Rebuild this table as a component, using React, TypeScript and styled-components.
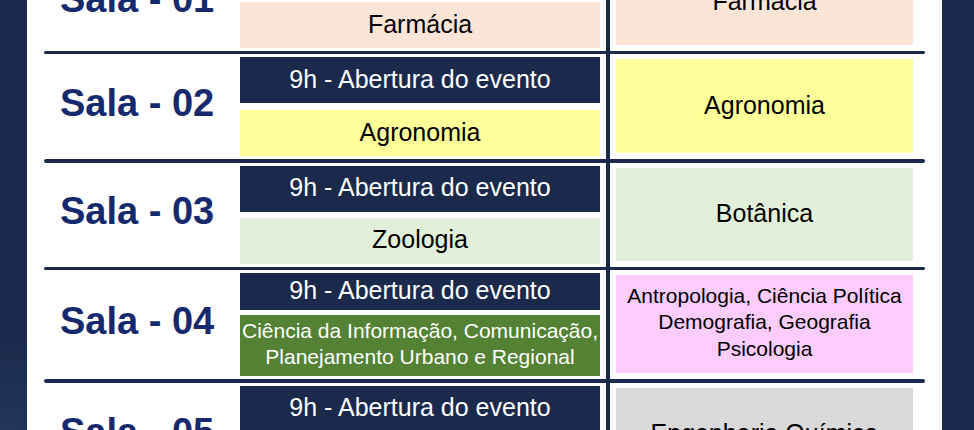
import React from 'react';
import styled, { createGlobalStyle } from 'styled-components';

const NAVY = '#1b2a4c';

const GlobalStyle = createGlobalStyle`
  html, body {
    margin: 0;
    padding: 0;
    background: ${NAVY};
    overflow: hidden;
  }
  body {
    font-family: "Liberation Sans", Arial, sans-serif;
    background: radial-gradient(circle at 0% 100%, #24405f 0%, ${NAVY} 14%);
    background-color: ${NAVY};
    min-height: 100vh;
  }
`;

const Page = styled.div`
  display: flex;
  padding: 0 32px 0 27px;
`;

const Panel = styled.div`
  width: 915px;
  margin-top: -46px;
  background: #ffffff;
  padding: 0 17px;
  box-sizing: border-box;
  display: flex;
  flex-direction: column;
`;

const Row = styled.div<{ h: number }>`
  display: grid;
  grid-template-columns: 196px 360px 16px 297px 12px;
  height: ${p => p.h}px;
`;

const Label = styled.div`
  display: flex;
  align-items: center;
  padding: 0 0 6px 16px;
  color: #15296c;
  font-weight: bold;
  font-size: 38px;
  white-space: nowrap;
`;

const LeftStack = styled.div`
  display: flex;
  flex-direction: column;
  justify-content: space-between;
  padding: 3px 0;
`;

const Cell = styled.div<{ bg: string; fg?: string; h?: number; small?: boolean }>`
  display: flex;
  align-items: center;
  justify-content: center;
  text-align: center;
  box-sizing: border-box;
  padding-bottom: 3px;
  background: ${p => p.bg};
  color: ${p => p.fg ?? '#000'};
  height: ${p => (p.h ? `${p.h}px` : 'auto')};
  font-size: ${p => (p.small ? '21px' : '25px')};
  line-height: ${p => (p.small ? '26.5px' : '28px')};
  white-space: nowrap;
  overflow: hidden;
`;

const Divider = styled.div`
  display: flex;
  justify-content: center;
  &::before {
    content: '';
    width: 3.5px;
    background: ${NAVY};
  }
`;

const RightCell = styled(Cell)`
  margin: 5px 0 6px;
`;

const Separator = styled.div`
  height: 3.4px;
  background: ${NAVY};
  border-radius: 2px;
  width: 881px;
`;

type Session = { color: string; text: React.ReactNode; small?: boolean; light?: boolean };

type Sala = {
  name: string;
  h: number;
  open: number;
  session: number;
  left: Session;
  right: Session;
};

const PEACH = '#fce4d6';
const YELLOW = '#ffff99';
const MINT = '#e2efda';
const GREEN = '#548235';
const PINK = '#ffccff';
const GREY = '#d9d9d9';

const salas: Sala[] = [
  {
    name: 'Sala - 01', h: 97, open: 38, session: 46,
    left: { color: PEACH, text: 'Farmácia' },
    right: { color: PEACH, text: 'Farmácia' },
  },
  {
    name: 'Sala - 02', h: 105, open: 46, session: 46,
    left: { color: YELLOW, text: 'Agronomia' },
    right: { color: YELLOW, text: 'Agronomia' },
  },
  {
    name: 'Sala - 03', h: 104, open: 46, session: 46,
    left: { color: MINT, text: 'Zoologia' },
    right: { color: MINT, text: 'Botânica' },
  },
  {
    name: 'Sala - 04', h: 109, open: 37, session: 61,
    left: {
      color: GREEN, small: true, light: true,
      text: <>Ciência da Informação, Comunicação,<br />Planejamento Urbano e Regional</>,
    },
    right: {
      color: PINK, small: true,
      text: <>Antropologia, Ciência Política<br />Demografia, Geografia<br />Psicologia</>,
    },
  },
  {
    name: 'Sala - 05', h: 105, open: 46, session: 46,
    left: { color: GREY, text: 'Engenharia Química' },
    right: { color: GREY, text: 'Engenharia Química' },
  },
];

const App: React.FC = () => {
  return (
    <>
      <GlobalStyle />
      <Page>
        <Panel>
          {salas.map((s, i) => (
            <React.Fragment key={s.name}>
              {i > 0 && <Separator />}
              <Row h={s.h}>
                <Label>{s.name}</Label>
                <LeftStack>
                  <Cell bg={NAVY} fg="#ffffff" h={s.open}>9h - Abertura do evento</Cell>
                  <Cell
                    bg={s.left.color}
                    fg={s.left.light ? '#ffffff' : '#000'}
                    h={s.session}
                    small={s.left.small}
                  >
                    {s.left.text}
                  </Cell>
                </LeftStack>
                <Divider />
                <RightCell bg={s.right.color} small={s.right.small}>
                  {s.right.text}
                </RightCell>
                <div />
              </Row>
            </React.Fragment>
          ))}
        </Panel>
      </Page>
    </>
  );
};

export default App;
